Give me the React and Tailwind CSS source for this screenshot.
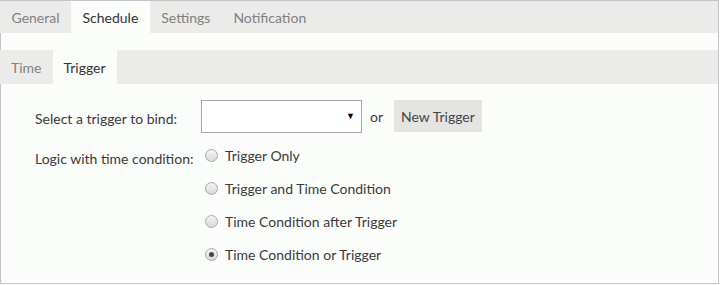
import React, { useState } from "react";

const font = { fontFamily: "Lato, 'Open Sans', sans-serif" };

function Radio({ checked, label, onClick }) {
  return (
    <label className="flex items-center gap-[7px] cursor-pointer" onClick={onClick}>
      <span className="w-[13px] h-[13px] rounded-full border border-[#a9a9a9] bg-gradient-to-b from-[#f4f4f4] to-[#d9d9d9] flex items-center justify-center">
        {checked && <span className="w-[5px] h-[5px] rounded-full bg-[#444]" />}
      </span>
      <span className="text-[14px] text-[#3a3a3a]">{label}</span>
    </label>
  );
}

export default function App() {
  const [logic, setLogic] = useState(3);
  const options = [
    "Trigger Only",
    "Trigger and Time Condition",
    "Time Condition after Trigger",
    "Time Condition or Trigger",
  ];
  const topTabs = ["General", "Schedule", "Settings", "Notification"];

  return (
    <div style={font} className="w-[719px] h-[284px] border border-[#c4c3c6] bg-[#fbfdfb] flex flex-col">
      <div className="h-[32px] bg-[#ebecea] flex text-[14px] -ml-px">
        {topTabs.map((t) => (
          <div
            key={t}
            className={`px-[11.5px] flex items-center ${
              t === "Schedule" ? "bg-[#fbfdfb] text-[#333]" : "text-[#808080]"
            }`}
          >
            {t}
          </div>
        ))}
      </div>
      <div className="h-[17px]" />
      <div className="h-[34px] bg-[#ebecea] flex text-[14px] -ml-px">
        <div className="px-[11px] flex items-center text-[#808080]">Time</div>
        <div className="px-[11px] flex items-center bg-[#fbfdfb] text-[#333]">Trigger</div>
      </div>
      <div className="pl-[34px] pt-[16px] text-[14px] text-[#3a3a3a]">
        <div className="flex items-center h-[32px]">
          <div className="w-[166px] pt-[5px]">Select a trigger to bind:</div>
          <div className="w-[161px] h-[33px] border border-[#a6a6a6] bg-white flex items-center justify-end pr-[6px] text-[9px] text-black">
            ▼
          </div>
          <span className="ml-[8px] mr-[11px]">or</span>
          <button className="h-[32px] px-[7px] bg-[#e4e5e3] text-[#444] text-[14px]">New Trigger</button>
        </div>
        <div className="flex mt-[14px]">
          <div className="w-[170px] pt-[2px]">Logic with time condition:</div>
          <div className="flex flex-col gap-[15px]">
            {options.map((o, i) => (
              <div key={o} className="h-[18px] flex items-center">
                <Radio checked={logic === i} label={o} onClick={() => setLogic(i)} />
              </div>
            ))}
          </div>
        </div>
      </div>
    </div>
  );
}
